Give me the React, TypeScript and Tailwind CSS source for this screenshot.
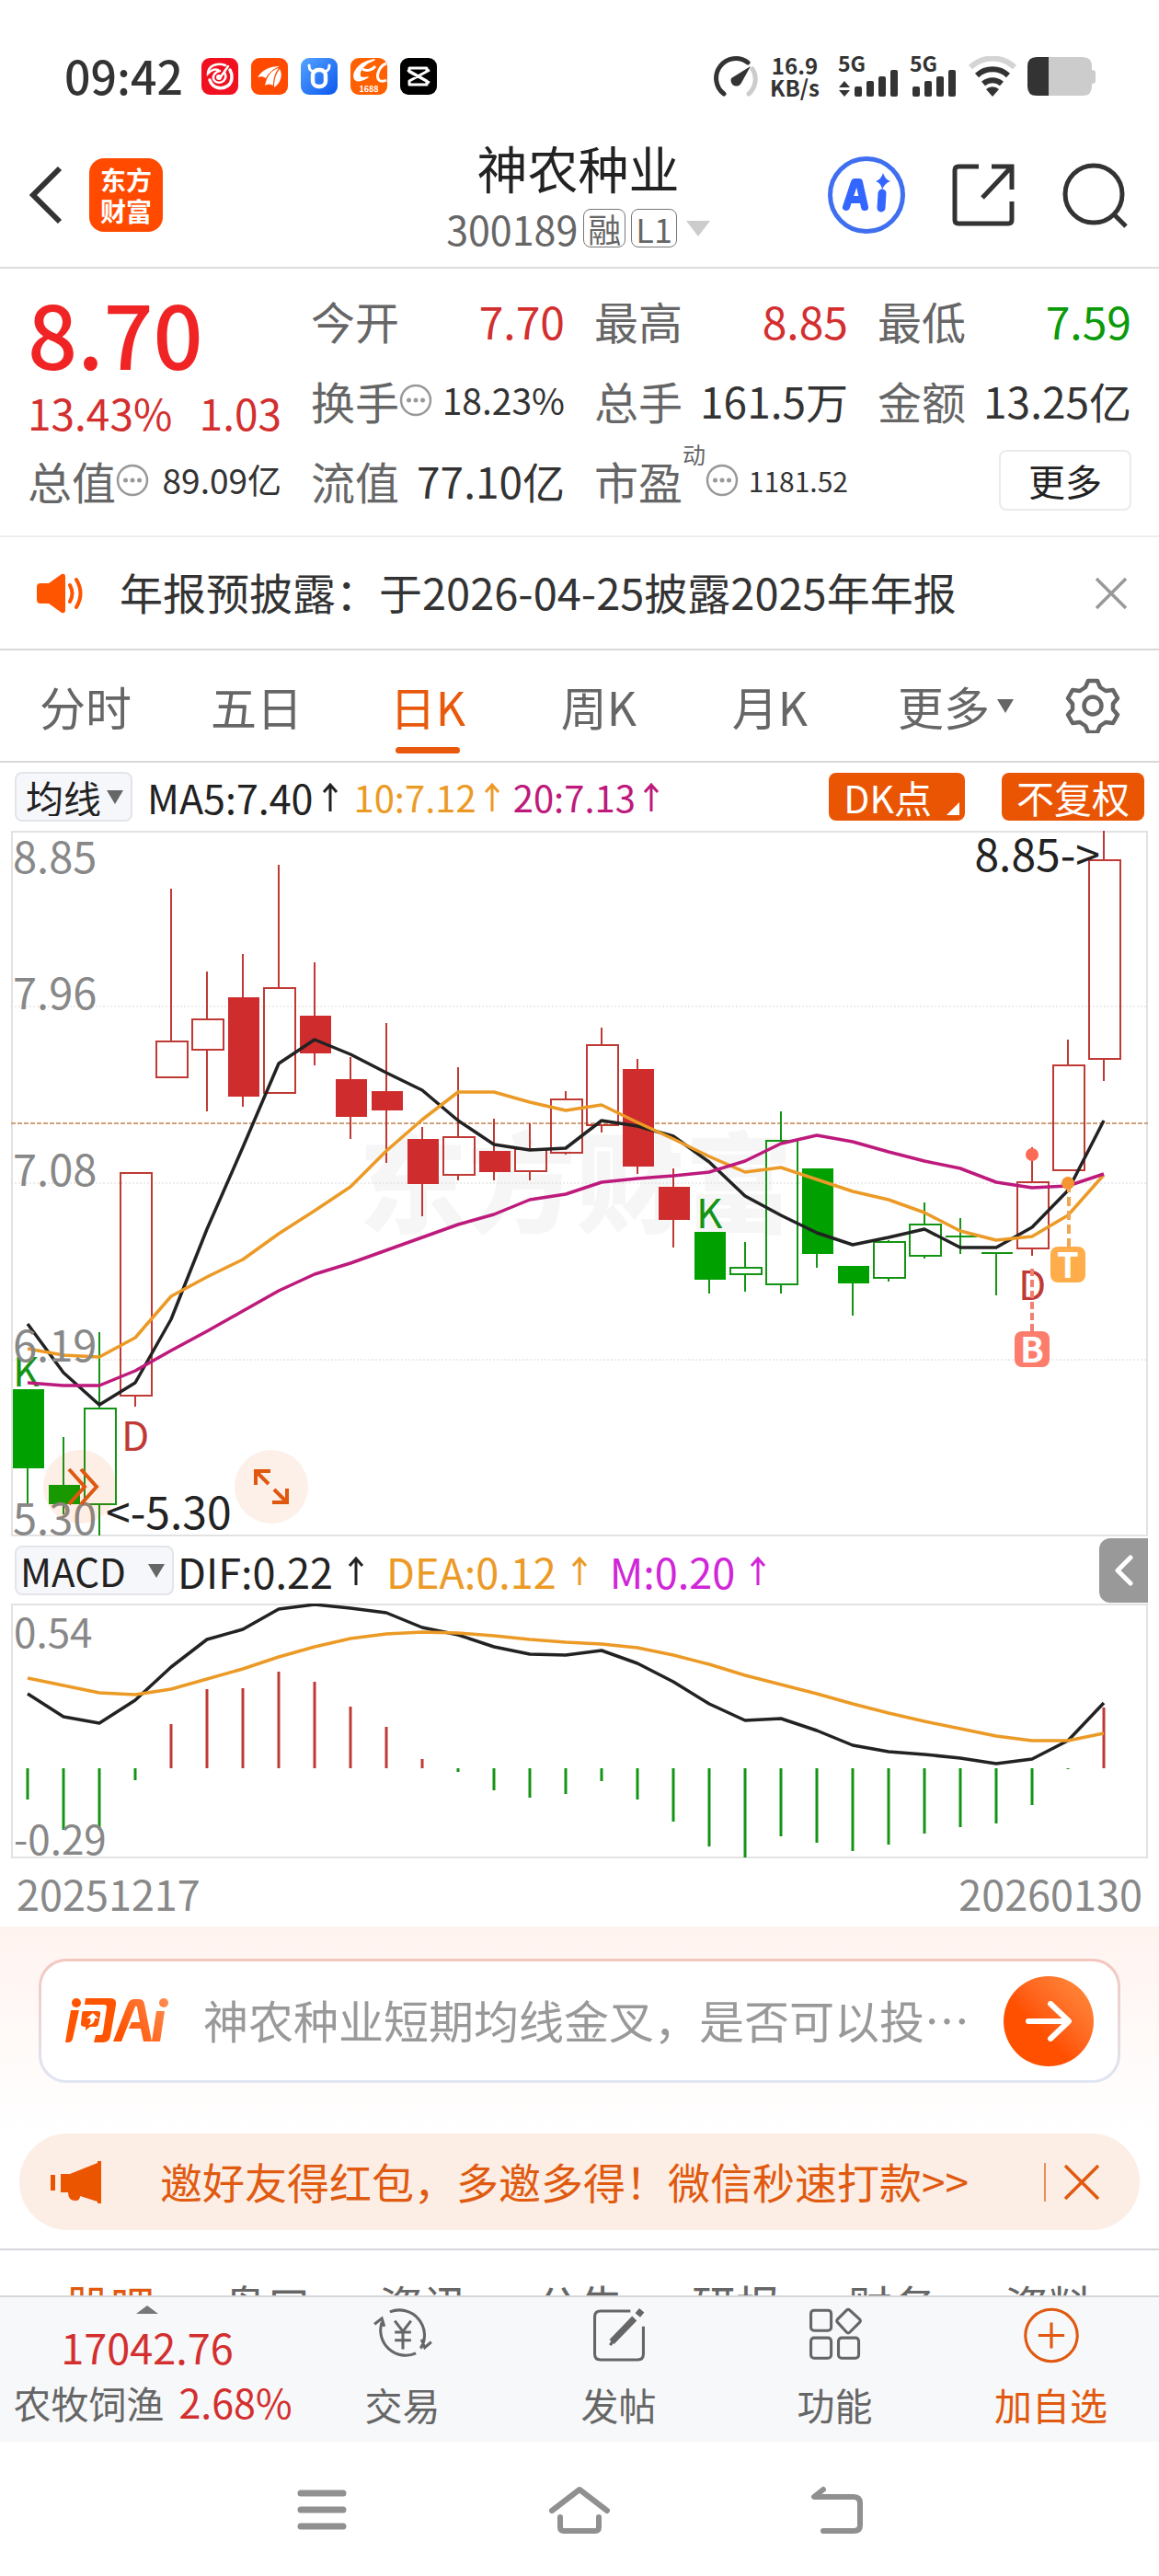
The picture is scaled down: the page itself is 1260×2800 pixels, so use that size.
import React from "react";

type Row = [string, number, number, number, number];

const RED = "#cf2d2d";
const RED_LINE = "#bf3a35";
const GREEN = "#00a000";
const GREEN_LINE = "#149414";

// kind, high, body top, body bottom, low. Upper case kinds are filled, x is a cross.
const candleRows: Row[] = [
  ["G", 1509, 1509, 1595, 1633],
  ["G", 1561, 1613, 1634, 1645],
  ["g", 1447, 1530, 1634, 1668],
  ["r", 1274, 1274, 1516, 1528],
  ["r", 965, 1131, 1170, 1170],
  ["r", 1055, 1107, 1140, 1207],
  ["R", 1036, 1083, 1191, 1202],
  ["r", 939, 1073, 1187, 1187],
  ["R", 1045, 1103, 1144, 1157],
  ["R", 1148, 1172, 1213, 1237],
  ["R", 1111, 1185, 1206, 1263],
  ["R", 1224, 1237, 1286, 1321],
  ["r", 1159, 1235, 1276, 1282],
  ["R", 1215, 1250, 1273, 1282],
  ["r", 1220, 1248, 1272, 1282],
  ["r", 1185, 1194, 1252, 1254],
  ["r", 1116, 1135, 1222, 1230],
  ["R", 1150, 1161, 1267, 1275],
  ["R", 1269, 1289, 1325, 1355],
  ["G", 1338, 1338, 1390, 1405],
  ["g", 1349, 1377, 1384, 1403],
  ["g", 1207, 1239, 1395, 1405],
  ["G", 1269, 1269, 1362, 1377],
  ["G", 1375, 1375, 1394, 1429],
  ["g", 1347, 1349, 1388, 1392],
  ["g", 1306, 1330, 1364, 1367],
  ["x", 1323, 1343, 1343, 1362],
  ["x", 1361, 1361, 1361, 1407],
  ["r", 1246, 1284, 1356, 1364],
  ["r", 1129, 1157, 1271, 1271],
  ["r", 902, 934, 1150, 1174],
];

const ma5 = [1438, 1491, 1526, 1502, 1433, 1335, 1246, 1155, 1129, 1145, 1165, 1184, 1217, 1243, 1249, 1247, 1217, 1223, 1234, 1262, 1299, 1320, 1339, 1352, 1344, 1335, 1355, 1355, 1333, 1293, 1217];
const ma10 = [1465, 1472, 1474, 1453, 1408, 1387, 1368, 1340, 1315, 1289, 1250, 1216, 1186, 1186, 1197, 1206, 1200, 1219, 1237, 1256, 1273, 1268, 1281, 1294, 1303, 1317, 1337, 1347, 1343, 1320, 1276];
const ma20 = [1502, 1505, 1505, 1489, 1467, 1446, 1424, 1402, 1384, 1372, 1358, 1344, 1330, 1319, 1303, 1297, 1284, 1280, 1277, 1273, 1261, 1242, 1233, 1240, 1251, 1261, 1269, 1284, 1290, 1288, 1275];
const macdBars = [1955, 1988, 1988, 1934, 1873, 1835, 1834, 1816, 1827, 1854, 1876, 1911, 1925, 1945, 1953, 1949, 1935, 1955, 1979, 2006, 2018, 1995, 2002, 2011, 2004, 1992, 1985, 1981, 1961, 1922, 1855];
const dif = [1840, 1865, 1872, 1847, 1811, 1781, 1770, 1748, 1743, 1747, 1752, 1768, 1776, 1789, 1797, 1798, 1793, 1807, 1827, 1851, 1869, 1867, 1880, 1896, 1903, 1906, 1910, 1916, 1911, 1891, 1850];
const dea = [1823, 1831, 1839, 1841, 1835, 1824, 1813, 1800, 1789, 1780, 1775, 1773, 1774, 1777, 1781, 1784, 1786, 1790, 1798, 1808, 1820, 1830, 1840, 1851, 1861, 1870, 1878, 1886, 1891, 1891, 1883];

const cx = (i: number) => 30 + i * 39;
const line = (ys: number[]) => ys.map((y, i) => `${cx(i)},${y}`).join(" ");

function CandleShape({ row, i }: { row: Row; i: number }) {
  const [k, high, top, bottom, low] = row;
  const red = k === "r" || k === "R";
  const stroke = red ? RED_LINE : GREEN_LINE;
  const solid = k === "R" || k === "G";
  const x = cx(i);
  return (
    <g stroke={stroke} strokeWidth={2}>
      {high < top && <line x1={x} x2={x} y1={high} y2={top} />}
      {low > bottom && <line x1={x} x2={x} y1={bottom} y2={low} />}
      {k === "x" && <line x1={x - 16} x2={x + 18} y1={top} y2={top} />}
      {solid && <rect x={x - 16} y={top} width={34} height={bottom - top} fill={red ? RED : GREEN} stroke="none" />}
      {(k === "r" || k === "g") && <rect x={x - 16} y={top} width={34} height={bottom - top} fill="none" />}
    </g>
  );
}

function UpArrow() {
  return (
    <svg viewBox="0 0 18 32" className="h-8 w-[18px] shrink-0" fill="none" stroke="currentColor" strokeWidth="3" aria-hidden="true">
      <path d="M9 32V3M2 11l7-8 7 8" />
    </svg>
  );
}

function Dots() {
  return (
    <svg viewBox="0 0 36 36" className="h-9 w-9 shrink-0" aria-hidden="true">
      <circle cx="18" cy="18" r="16" fill="none" stroke="#999" strokeWidth="2.500" />
      <g fill="#999">
        <circle cx="10.500" cy="18" r="2.500" />
        <circle cx="18" cy="18" r="2.500" />
        <circle cx="25.500" cy="18" r="2.500" />
      </g>
    </svg>
  );
}

function StatusBar() {
  return (
    <div className="flex h-[150px] items-center justify-between pt-4 pr-[69px] pl-[70px] text-[#333]">
      <div className="flex items-center">
        <span className="mr-5 pb-1 text-[50px] leading-none font-medium">09:42</span>
        <div className="flex gap-3.5">
          <svg viewBox="0 0 40 40" className="h-10 w-10">
            <rect width="40" height="40" rx="9" fill="#f01020" />
            <g fill="none" stroke="#fff" strokeLinecap="round">
              <path d="M26 8C15 4 7 10 7 17c4-4 8-5 11-4" strokeWidth="2.500" />
              <path d="M9 24c3 9 13 11 20 6 5-4 5-12 2-17" strokeWidth="3.500" />
              <path d="M20 14c-5 1-8 5-7 9 2 4 7 5 11 2 3-3 3-6 1-9" strokeWidth="2.500" />
              <path d="M29 9l-9 13" strokeWidth="2.500" />
            </g>
            <circle cx="19" cy="21" r="3" fill="#fff" />
          </svg>
          <svg viewBox="0 0 40 40" className="h-10 w-10">
            <rect width="40" height="40" rx="9" fill="#ff4a00" />
            <path d="M7 21C12 13 20 9 31 9 24 12 19 16 16 22 13 20 10 20 7 21zM15 30C17 20 22 13 30 11 26 16 24 22 24 30 21 28 18 28 15 30zM25 32C25 23 27 17 31 12 35 18 32 28 25 32z" fill="#fff" />
          </svg>
          <svg viewBox="0 0 40 40" className="h-10 w-10">
            <defs>
              <linearGradient id="bull" x1="0" y1="0" x2="1" y2="1">
                <stop offset="0" stopColor="#55a4ff" />
                <stop offset="1" stopColor="#0a57ee" />
              </linearGradient>
            </defs>
            <rect width="40" height="40" rx="9" fill="url(#bull)" />
            <rect x="13" y="13" width="14" height="18" rx="6" fill="none" stroke="#fff" strokeWidth="4.500" />
            <path d="M9 8c0 5 2 7 7 7M31 8c0 5-2 7-7 7" fill="none" stroke="#fff" strokeWidth="3" strokeLinecap="round" />
          </svg>
          <svg viewBox="0 0 40 40" className="h-10 w-10 overflow-visible">
            <rect width="40" height="40" rx="9" fill="#ff6000" />
            <path d="M26 2C13 3 3 13 4 21c1 6 9 4 15 0-6 1-9 1-9-3 0-6 7-13 16-16z" fill="#fff" stroke="#fff" strokeWidth="1.500" strokeLinejoin="round" />
            <path d="M13 12c5 3 11 1 14-3M39 6c-7 2-12 13-8 18 2 2 6 1 8 0" fill="none" stroke="#fff" strokeWidth="3" />
            <text x="20" y="37" fill="#fff" fontSize="9" fontWeight="700" textAnchor="middle">1688</text>
          </svg>
          <svg viewBox="0 0 40 40" className="h-10 w-10">
            <rect width="40" height="40" rx="9" fill="#000" />
            <path d="M32 13L10 25v4h19v-4L8 13M32 27L10 15v-4h19v4" fill="none" stroke="#fff" strokeWidth="3" strokeLinejoin="round" />
          </svg>
        </div>
      </div>
      <div className="flex items-center">
        <svg viewBox="0 0 48 44" className="mr-[13px] h-11 w-12" fill="none">
          <path d="M11 41A21 21 0 0 1 37 7" stroke="#333" strokeWidth="5" strokeLinecap="round" />
          <path d="M42 14a21 21 0 0 1-4 27" stroke="#ccc" strokeWidth="5" strokeLinecap="round" />
          <path d="M40 11L30 29a6 6 0 0 1-11-5z" fill="#333" />
        </svg>
        <div className="mr-5 text-center text-[24px] leading-6 font-bold">
          <div>16.9</div>
          <div>KB/s</div>
        </div>
        <svg viewBox="0 0 66 44" className="mr-3 h-11 w-[66px] overflow-visible" fill="#333">
          <text x="0" y="17" fontSize="23" fontWeight="700">5G</text>
          <path d="M7 27l6 7H1zM7 44l6-7H1z" />
          <rect x="18" y="33" width="8" height="11" rx="2" />
          <rect x="31" y="27" width="8" height="17" rx="2" />
          <rect x="44" y="22" width="8" height="22" rx="2" />
          <rect x="57" y="15" width="8" height="29" rx="2" />
        </svg>
        <svg viewBox="0 0 52 44" className="mr-3 h-11 w-[52px] overflow-visible" fill="#333">
          <text x="0" y="17" fontSize="23" fontWeight="700">5G</text>
          <rect x="3" y="33" width="8" height="11" rx="2" />
          <rect x="16" y="27" width="8" height="17" rx="2" />
          <rect x="29" y="22" width="8" height="22" rx="2" />
          <rect x="42" y="15" width="8" height="29" rx="2" />
        </svg>
        <svg viewBox="0 0 52 44" className="mr-3 h-11 w-[52px]" fill="none" strokeWidth="6">
          <path d="M2 12a35 35 0 0 1 48 0" stroke="#d4d4d4" />
          <path d="M9 21a25 25 0 0 1 34 0" stroke="#333" />
          <path d="M16 30a15 15 0 0 1 20 0" stroke="#333" />
          <path d="M26 44l-7-8a10 10 0 0 1 14 0z" fill="#333" />
        </svg>
        <svg viewBox="0 0 74 42" className="h-[42px] w-[74px]">
          <path d="M12 0h48q10 0 10 10v4q4 0 4 3v9q0 3-4 3v3q0 10-10 10H12z" fill="#ccc" />
          <path d="M23 0v42H10Q0 42 0 32V10Q0 0 10 0z" fill="#333" />
        </svg>
      </div>
    </div>
  );
}

function Header() {
  return (
    <header className="flex h-[142px] items-center justify-between border-b-2 border-[#dedede] pr-[34px] pb-4 pl-[31px]">
      <div className="flex w-[400px] items-center gap-7">
        <button aria-label="返回">
          <svg viewBox="0 0 38 64" className="h-16 w-[38px]" fill="none" stroke="#333" strokeWidth="6">
            <path d="M34 3L5 32l29 29" />
          </svg>
        </button>
        <a href="#home" className="flex h-20 w-20 flex-col items-center justify-center rounded-2xl bg-[#ff4a00] text-[28px] leading-[34px] font-bold text-white">
          <span>东方</span>
          <span>财富</span>
        </a>
      </div>
      <div className="flex flex-col items-center">
        <h1 className="text-[55px] leading-[66px] text-[#222]">神农种业</h1>
        <div className="mt-1.5 flex items-center gap-1.5 text-[#666]">
          <span className="text-[43px] leading-[56px]">300189</span>
          <span className="rounded-lg border border-[#777] px-1 text-[36px] leading-[40px]">融</span>
          <span className="rounded-lg border border-[#777] px-1 text-[36px] leading-[40px]">L1</span>
          <svg viewBox="0 0 26 17" className="ml-1 h-[17px] w-[26px]" fill="#ccc"><path d="M0 0h26L13 17z" /></svg>
        </div>
      </div>
      <div className="flex w-[400px] items-center justify-end gap-[50px]">
        <button aria-label="AI">
          <svg viewBox="0 0 84 84" className="h-[84px] w-[84px]">
            <circle cx="42" cy="42" r="39.500" fill="#fff" stroke="#3f6ff0" strokeWidth="5" />
            <path d="M20 55l9-27h5l6 27M25 47h13" fill="none" stroke="#3366ff" strokeWidth="8" strokeLinejoin="round" strokeLinecap="round" />
            <path d="M59 40l-1 16" stroke="#3366ff" strokeWidth="9" strokeLinecap="round" />
            <path d="M60 18q2 7 8 9-6 2-9 9-1-7-7-9 6-2 8-9z" fill="#3366ff" />
          </svg>
        </button>
        <button aria-label="分享">
          <svg viewBox="0 0 70 70" className="h-[70px] w-[70px]" fill="none" stroke="#333" strokeWidth="5">
            <path d="M30 4H8q-4 0-4 4v54q0 4 4 4h54q4 0 4-4V42M44 4h22v25M66 4L34 38" />
          </svg>
        </button>
        <button aria-label="搜索">
          <svg viewBox="0 0 72 72" className="h-[72px] w-[72px]" fill="none" stroke="#333" strokeWidth="5">
            <circle cx="35" cy="35" r="31" />
            <path d="M57 57l13 13" />
          </svg>
        </button>
      </div>
    </header>
  );
}

function Quote() {
  return (
    <section className="grid grid-cols-4 gap-x-8 border-b-2 border-[#eeeeee] px-[30px] pt-3 pb-[17px] text-[#333]">
      <div className="row-span-2">
        <div className="text-[95px] leading-[114px] font-medium text-[#f02424]">8.70</div>
        <div className="flex items-center justify-between text-[46px] leading-[60px] text-[#d32f2f]">
          <span>13.43%</span>
          <span>1.03</span>
        </div>
      </div>
      <Cell label="今开"><span className="text-[48px] text-[#d32f2f]">7.70</span></Cell>
      <Cell label="最高"><span className="text-[48px] text-[#d32f2f]">8.85</span></Cell>
      <Cell label="最低"><span className="text-[48px] text-[#0a9a0a]">7.59</span></Cell>
      <Cell label="换手" dots><span className="text-[39px]">18.23%</span></Cell>
      <Cell label="总手"><span className="text-[46px]">161.5万</span></Cell>
      <Cell label="金额"><span className="text-[46px]">13.25亿</span></Cell>
      <Cell label="总值" dots><span className="text-[37px]">89.09亿</span></Cell>
      <Cell label="流值"><span className="text-[46px]">77.10亿</span></Cell>
      <Cell label="市盈" dots sup="动"><span className="text-[30px]">1181.52</span></Cell>
      <div className="flex items-center justify-end">
        <button className="rounded-lg border-2 border-[#ebebeb] px-[30px] text-[40px] leading-[62px] text-[#222]">更多</button>
      </div>
    </section>
  );
}

function Cell({ label, dots, sup, children }: { label: string; dots?: boolean; sup?: string; children: React.ReactNode }) {
  return (
    <div className="flex h-[87px] items-center justify-between leading-none whitespace-nowrap">
      <span className="flex items-center text-[48px] text-[#666]">
        {label}
        {sup && <sup className="mb-8 text-[25px] leading-none">{sup}</sup>}
        {dots && <Dots />}
      </span>
      {children}
    </div>
  );
}

function Notice() {
  return (
    <section className="flex h-[123px] items-center border-b-2 border-[#d8d8d8] pr-[34px] pl-10">
      <svg viewBox="0 0 52 44" className="h-11 w-[52px]">
        <path d="M4 11h9L27 1q4-1 4 3v36q0 4-4 3L13 33H4q-4 0-4-4V15q0-4 4-4z" fill="#ff5500" />
        <path d="M36 13q5 9 0 18M43 7q9 15 0 30" fill="none" stroke="#ff5500" strokeWidth="4" strokeLinecap="round" />
      </svg>
      <a href="#notice" className="ml-[38px] flex-1 pb-1 text-[47px] leading-none whitespace-nowrap text-[#333]">年报预披露：于2026-04-25披露2025年年报</a>
      <button aria-label="关闭公告">
        <svg viewBox="0 0 36 36" className="h-9 w-9" fill="none" stroke="#999" strokeWidth="3.500"><path d="M2 2l32 32M34 2L2 34" /></svg>
      </button>
    </section>
  );
}

function PeriodTabs() {
  return (
    <nav className="flex h-[122px] border-b-2 border-[#d8d8d8] text-[50px] text-[#666]">
      {["分时", "五日", "日K", "周K", "月K"].map((t) => (
        <button key={t} className={t === "日K" ? "relative flex-1 text-[#e8590c]" : "relative flex-1"}>
          {t}
          {t === "日K" && <span className="absolute bottom-2 left-1/2 h-[7px] w-[70px] -translate-x-1/2 rounded-sm bg-[#e8590c]" />}
        </button>
      ))}
      <button className="flex flex-1 items-center justify-center gap-2 pl-4">
        更多
        <svg viewBox="0 0 18 15" className="h-[15px] w-[18px]" fill="#666"><path d="M0 0h18L9 15z" /></svg>
      </button>
      <button aria-label="设置" className="flex w-32 items-center justify-start pl-[26px]">
        <svg viewBox="0 0 60 60" className="h-[60px] w-[60px]" fill="none" stroke="#666" strokeWidth="4.500" strokeLinejoin="round">
          <path d="M25 3h10l3 7 6 4 8-1 5 9-5 6v6l5 6-5 9-8-1-6 4-3 7H25l-3-7-6-4-8 1-5-9 5-6v-6l-5-6 5-9 8 1 6-4z" />
          <circle cx="30" cy="30" r="9.500" />
        </svg>
      </button>
    </nav>
  );
}

function IndicatorSelect({ label, name, className }: { label: string; name: string; className: string }) {
  return (
    <div className="relative shrink-0">
      <select aria-label={name} className={"h-[54px] appearance-none rounded-lg border-2 border-[#e3e5ea] bg-[#f6f7fa] leading-none text-[#222] " + className}>
        <option>{label}</option>
      </select>
      <svg viewBox="0 0 18 15" className="pointer-events-none absolute top-5 right-2.5 h-[15px] w-[18px]" fill="#666"><path d="M0 0h18L9 15z" /></svg>
    </div>
  );
}

function KChart() {
  return (
    <div className="relative px-3">
      <svg viewBox="12 902 1236 768" className="block h-auto w-full">
        <text x="390" y="1330" fontSize="118" fontWeight="900" fill="#f6f6f6">东方财富</text>
        <rect x="13" y="903" width="1234" height="765" fill="none" stroke="#e2e2e2" strokeWidth="2" />
        {[1093, 1285, 1477].map((y) => (
          <line key={y} x1="12" x2="1248" y1={y} y2={y} stroke="#d9d9d9" strokeDasharray="2 2" />
        ))}
        <line x1="12" x2="1248" y1="1220" y2="1220" stroke="#cfa27c" strokeWidth="2" strokeDasharray="5 2" />
        {candleRows.map((row, i) => <CandleShape key={i} row={row} i={i} />)}
        <g fontSize="44">
          <text x="14" y="1506" fill={GREEN_LINE}>K</text>
          <text x="757" y="1334" fill={GREEN_LINE}>K</text>
          <text x="132" y="1576" fill={RED_LINE}>D</text>
          <text x="1107" y="1412" fill={RED_LINE}>D</text>
        </g>
        <g fill="none" strokeWidth="3.500" strokeLinejoin="round">
          <polyline points={line(ma5)} stroke="#222" />
          <polyline points={line(ma10)} stroke="#ec9a26" />
          <polyline points={line(ma20)} stroke="#bd1a7c" />
        </g>
        <line x1="1122" x2="1122" y1="1378" y2="1446" stroke="#f0806f" strokeWidth="4" strokeDasharray="8 4" />
        <line x1="1162" x2="1162" y1="1285" y2="1354" stroke="#f2a550" strokeWidth="4" strokeDasharray="10 5" />
        <circle cx="1122" cy="1254" r="7" fill="#fa6a55" />
        <circle cx="1161" cy="1285" r="7" fill="#f59532" />
        <rect x="1103" y="1446" width="38" height="39" rx="8" fill="#fc7d6c" />
        <text x="1122" y="1480" fontSize="38" fontWeight="700" fill="#fff" textAnchor="middle">B</text>
        <rect x="1142" y="1354" width="38" height="39" rx="8" fill="#ffad4a" />
        <text x="1161" y="1388" fontSize="38" fontWeight="700" fill="#fff" textAnchor="middle">T</text>
        <g fontSize="47" fill="#888">
          <text x="14" y="948">8.85</text>
          <text x="14" y="1096">7.96</text>
          <text x="14" y="1288">7.08</text>
          <text x="14" y="1479">6.19</text>
          <text x="14" y="1667">5.30</text>
        </g>
        <g fontSize="48" fill="#222">
          <text x="1196" y="946" textAnchor="end">8.85-&gt;</text>
          <text x="115" y="1661">&lt;-5.30</text>
        </g>
      </svg>
      <button aria-label="快进" className="absolute bottom-[15px] left-[47px] flex h-20 w-20 items-center justify-center rounded-full bg-[#e8590c]/10 pl-1.5">
        <svg viewBox="0 0 36 44" className="h-11 w-9" fill="none" stroke="#e0570f" strokeWidth="4"><path d="M3 3l17 19L3 41M16 3l17 19-17 19" /></svg>
      </button>
      <button aria-label="全屏" className="absolute bottom-[15px] left-[255px] flex h-20 w-20 items-center justify-center rounded-full bg-[#fdf0e9]">
        <svg viewBox="0 0 40 40" className="h-10 w-10" fill="none" stroke="#e0570f" strokeWidth="4"><path d="M3 18V3h16M4 4l13 13M37 22v15H21M36 36L23 23" /></svg>
      </button>
    </div>
  );
}

function MacdChart() {
  return (
    <div className="px-3">
      <svg viewBox="12 1742 1236 278" className="block h-auto w-full">
        <rect x="13" y="1743" width="1234" height="275" fill="none" stroke="#e2e2e2" strokeWidth="2" />
        {macdBars.map((y, i) => (
          <line key={i} x1={cx(i)} x2={cx(i)} y1="1921" y2={y} stroke={y < 1921 ? RED_LINE : GREEN_LINE} strokeWidth="3" />
        ))}
        <g fill="none" strokeWidth="3.500" strokeLinejoin="round">
          <polyline points={line(dif)} stroke="#222" />
          <polyline points={line(dea)} stroke="#ec9a26" />
        </g>
        <g fontSize="44" fill="#888">
          <text x="15" y="1790">0.54</text>
          <text x="15" y="2015">-0.29</text>
        </g>
      </svg>
    </div>
  );
}

function AskAi() {
  return (
    <section className="bg-linear-to-b from-[#fff3ef] to-white px-[42px] pt-[35px] pb-[55px]">
      <div className="rounded-[30px] bg-linear-to-b from-[#f3c6be] to-[#dfe6f3] p-[3px]">
        <form className="flex h-[129px] items-center rounded-[27px] bg-white px-[26px]">
          <svg viewBox="0 0 114 50" className="h-[50px] w-[114px] shrink-0">
            <defs>
              <linearGradient id="ai" gradientUnits="userSpaceOnUse" x1="60" y1="40" x2="112" y2="4">
                <stop offset="0" stopColor="#ff5200" />
                <stop offset="1" stopColor="#ff8a50" />
              </linearGradient>
            </defs>
            <g fill="#ff5500">
              <circle cx="12" cy="5" r="5" />
              <path d="M6 13h9L8 44q-1 4-5 4H0z" />
              <path d="M22 0h27q7 0 6 7l-6 34q-1 7-8 7H31l2-8h5q3 0 3-3l4-27q0-3-3-3H21z" />
              <path d="M20 14h15q4 0 3 4l-2 10q0 3-4 3h-5l-5 4v-4q-6 0-5-4l1-9q0-4 2-4z" />
            </g>
            <path d="M30 16l6 6h-4q0 6-7 7 4-3 2-7h-4z" fill="#fff" />
            <g fill="url(#ai)">
              <path d="M52 47L68 6q2-5 7-5h5q5 0 6 5l8 41h-9l-3-14H69l3-7h9L78 9q-1-1-2 0L61 47z" />
              <path d="M99 14h9l-5 33h-9z" />
              <circle cx="107" cy="5" r="5" />
            </g>
          </svg>
          <input aria-label="问AI" placeholder="神农种业短期均线金叉，是否可以投…" className="ml-9 min-w-0 flex-1 bg-transparent pb-1 text-[49px] text-[#333] outline-none placeholder:text-[#999]" />
          <button type="button" aria-label="发送" className="ml-9 flex h-[98px] w-[98px] shrink-0 items-center justify-center rounded-full bg-linear-to-tr from-[#ff5000] from-40% to-[#ff8f40]">
            <svg viewBox="0 0 50 44" className="h-11 w-[50px]" fill="none" stroke="#fff" strokeWidth="6" strokeLinecap="round" strokeLinejoin="round"><path d="M3 22h43M27 3l20 19-20 19" /></svg>
          </button>
        </form>
      </div>
    </section>
  );
}

function Banner() {
  return (
    <div className="px-[21px] pb-5">
      <div className="flex h-[105px] items-center rounded-full bg-[#fceee5] pr-11 pl-[34px] text-[#e05a10]">
        <svg viewBox="0 0 56 46" className="h-[46px] w-14" fill="#ec5500">
          <rect x="0" y="15" width="5" height="17" />
          <path d="M11 14h10L51 2V0h4v46h-4v-2L32 38q0 5-5 5-8 0-8-9h-8z" />
        </svg>
        <a href="#invite" className="ml-[63px] flex-1 pb-1 text-[46px] leading-none whitespace-nowrap">邀好友得红包，多邀多得！微信秒速打款&gt;&gt;</a>
        <span className="mr-5 h-[42px] w-0.5 bg-[#e5905f]" />
        <button aria-label="关闭活动">
          <svg viewBox="0 0 38 38" className="h-[38px] w-[38px]" fill="none" stroke="#e05a10" strokeWidth="3.500"><path d="M1 1l36 36M37 1L1 37" /></svg>
        </button>
      </div>
    </div>
  );
}

function BottomBar() {
  return (
    <footer className="flex h-[159px] border-t-2 border-[#d5d6da] bg-[#f7f8fa] text-[#666]">
      <a href="#index" className="flex w-80 flex-col items-center pt-[9px] whitespace-nowrap">
        <svg viewBox="0 0 24 9" className="h-[9px] w-6" fill="#777"><path d="M12 0l12 9H0z" /></svg>
        <span className="mt-1.5 text-[45px] leading-[60px] text-[#d32f2f]">17042.76</span>
        <span className="pl-3 text-[41px] leading-[58px]">农牧饲渔<span className="ml-4 text-[43px] text-[#d32f2f]">2.68%</span></span>
      </a>
      <BarItem label="交易">
        <path d="M22 9a31 31 0 0 1 38 45M54 60A31 31 0 0 1 12 22M3 24l9-7 3 10M73 46l-8 7-4-10" />
        <path d="M28 20l10 13 10-13M28 34h20M28 44h20M38 33v22" />
      </BarItem>
      <BarItem label="发帖">
        <path d="M52 8H15q-7 0-7 7v46q0 7 7 7h46q7 0 7-7V27" />
        <path d="M29 46L57 17M61 13l5-6" strokeWidth="8" />
        <path d="M27 50l7-10" />
      </BarItem>
      <BarItem label="功能">
        <rect x="8" y="7" width="25" height="25" rx="4" />
        <rect x="8" y="41" width="25" height="25" rx="4" />
        <rect x="42" y="41" width="25" height="25" rx="4" />
        <path d="M52 7q2-2 4 0l12 11q2 2 0 4L56 34q-2 2-4 0L41 22q-2-2 0-4z" />
      </BarItem>
      <BarItem label="加自选" active>
        <circle cx="38" cy="38" r="32" />
        <path d="M38 22v32M22 38h32" />
      </BarItem>
    </footer>
  );
}

function BarItem({ label, active, children }: { label: string; active?: boolean; children: React.ReactNode }) {
  return (
    <button className={active ? "flex flex-1 flex-col items-center pt-2 text-[#e0590f]" : "flex flex-1 flex-col items-center pt-2"}>
      <svg viewBox="0 0 76 76" className="h-[76px] w-[76px]" fill="none" stroke="currentColor" strokeWidth="3.500">{children}</svg>
      <span className="text-[41px] leading-[82px]">{label}</span>
    </button>
  );
}

function SystemNav() {
  return (
    <nav className="flex h-[147px] items-center justify-center gap-[212px]">
      <button aria-label="最近任务">
        <svg viewBox="0 0 68 54" className="h-[54px] w-[68px]" fill="none" stroke="#909090" strokeWidth="7" strokeLinecap="round"><path d="M11 9h46M11 27h46M11 45h46" /></svg>
      </button>
      <button aria-label="主屏幕">
        <svg viewBox="0 0 68 54" className="h-[54px] w-[68px]" fill="none" stroke="#909090" strokeWidth="6" strokeLinecap="round" strokeLinejoin="round"><path d="M4 28L34 5l30 23M13 35v11q0 4 4 4h34q4 0 4-4V35" /></svg>
      </button>
      <button aria-label="返回上一页">
        <svg viewBox="0 0 68 54" className="h-[54px] w-[68px]" fill="none" stroke="#909090" strokeWidth="6" strokeLinecap="round" strokeLinejoin="round"><path d="M19 5L9 13h43q7 0 7 7v24q0 6-7 6H19" /></svg>
      </button>
    </nav>
  );
}

export default function App() {
  return (
    <div className="overflow-hidden bg-white font-['Noto_Sans_CJK_SC',sans-serif]" lang="zh-CN">
      <StatusBar />
      <Header />
      <main>
        <Quote />
        <Notice />
        <PeriodTabs />
        <div className="flex h-[74px] items-center px-4 text-[43px] leading-none">
          <IndicatorSelect label="均线" name="均线指标" className="w-[128px] pl-2.5 text-[41px]" />
          <span className="ml-4 flex items-center gap-2.5 text-[#222]">MA5:7.40<UpArrow /></span>
          <span className="ml-4 flex items-center gap-2 text-[40px] text-[#ec9a26]">10:7.12<UpArrow /></span>
          <span className="ml-3.5 flex items-center gap-2 text-[40px] text-[#bd1a7c]">20:7.13<UpArrow /></span>
          <button className="relative ml-auto h-[52px] rounded-lg bg-[#ea5504] pr-9 pl-4 text-[41px] text-white">
            DK点
            <span className="absolute right-1.5 bottom-1.5 border-b-[14px] border-l-[14px] border-b-white border-l-transparent" />
          </button>
          <button className="ml-10 h-[52px] rounded-lg bg-[#ea5504] px-4 text-[41px] text-white">不复权</button>
        </div>
        <KChart />
        <div className="flex h-[72px] items-center pr-3 pl-4 text-[45px] leading-none">
          <IndicatorSelect label="MACD" name="副图指标" className="w-[173px] pl-1 text-[42px]" />
          <span className="ml-1 flex items-center gap-4 text-[#222]">DIF:0.22<UpArrow /></span>
          <span className="ml-6 flex items-center gap-4 text-[#ec9a26]">DEA:0.12<UpArrow /></span>
          <span className="ml-6 flex items-center gap-4 text-[#d026d8]">M:0.20<UpArrow /></span>
          <button aria-label="展开" className="ml-auto flex h-[70px] w-[53px] items-center justify-center rounded-l-xl bg-[#999]">
            <svg viewBox="0 0 20 34" className="h-[34px] w-5" fill="none" stroke="#fff" strokeWidth="5" strokeLinecap="round" strokeLinejoin="round"><path d="M17 3L3 17l14 14" /></svg>
          </button>
        </div>
        <MacdChart />
        <div className="flex justify-between px-[18px] text-[45px] leading-[73px] text-[#888]">
          <span>20251217</span>
          <span>20260130</span>
        </div>
        <AskAi />
        <Banner />
        <nav className="flex h-[51px] overflow-hidden border-t-2 border-[#d5d6da] px-[35px] pt-[34px] text-[48px] leading-none text-[#666]">
          {["股吧", "盘口", "资讯", "公告", "研报", "财务", "资料"].map((t) => (
            <a key={t} href="#tab" className={t === "股吧" ? "flex-1 text-center text-[#e0590f]" : "flex-1 text-center"}>{t}</a>
          ))}
        </nav>
      </main>
      <BottomBar />
      <SystemNav />
    </div>
  );
}
